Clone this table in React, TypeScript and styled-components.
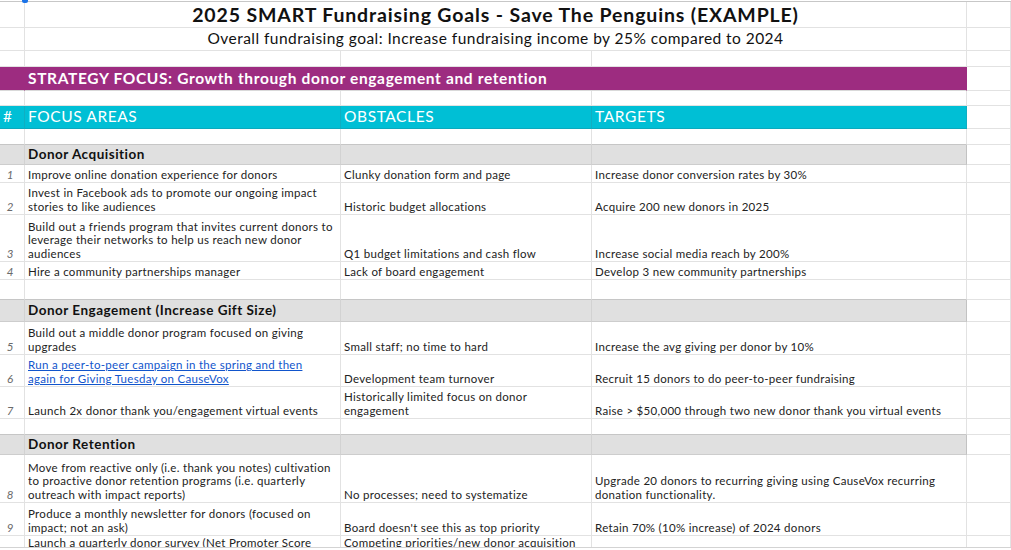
import React from "react";
import styled, { createGlobalStyle, css } from "styled-components";

const GlobalStyle = createGlobalStyle`
  html, body { margin: 0; padding: 0; background: #ffffff; }
  body { font-family: "Lato", "Open Sans", sans-serif; color: #222; }
`;

const COLS = "25px 316px 251px 375px 44px";
const GRID = "#e2e2e2";
const FONT = `"Lato", "Open Sans", sans-serif`;

const Sheet = styled.div`
  position: relative;
  height: 548px;
  overflow: hidden;
  padding-top: 1px;
  border-bottom: 1px solid #d3d3d3;
  box-sizing: border-box;
`;

const Grid = styled.div`
  border-top: 1px solid #c7c7c7;
`;

const Marker = styled.span`
  position: absolute;
  left: 22px;
  top: 0;
  width: 6px;
  height: 3px;
  background: #1a73e8;
  border-radius: 0 0 2px 2px;
`;

const Row = styled.div<{ $h: number }>`
  display: grid;
  grid-template-columns: ${COLS};
  height: ${(p) => p.$h}px;
`;

type Variant = "plain" | "purple" | "teal" | "gray";

const Cell = styled.div<{
  $span?: number;
  $variant?: Variant;
  $darkBottom?: boolean;
  $edge?: boolean;
}>`
  box-sizing: border-box;
  grid-column: span ${(p) => p.$span ?? 1};
  display: flex;
  flex-direction: column;
  justify-content: flex-end;
  padding: 0 3px 1px 3px;
  overflow: hidden;
  font-family: ${FONT};
  font-size: 11.5px;
  letter-spacing: 0.3px;
  line-height: 13.4px;
  color: #222;
  border-right: 1px solid ${GRID};
  border-bottom: 1px solid ${(p) => (p.$darkBottom ? "#c6c6c6" : GRID)};
  white-space: nowrap;
  ${(p) =>
    p.$variant === "purple" &&
    css`
      background: #9d2c80;
      color: #fff;
      border-right-color: #9d2c80;
      border-bottom-color: #d9d9d9;
      justify-content: center;
      font-weight: 700;
      font-size: 15.5px;
      letter-spacing: 0.65px;
      padding-bottom: 0;
    `}
  ${(p) =>
    p.$variant === "teal" &&
    css`
      background: #00bfd5;
      color: #fff;
      border-right-color: #10aec2;
      border-bottom-color: #0ba9bd;
      justify-content: center;
      font-size: 15.5px;
      letter-spacing: 0.6px;
      padding-bottom: 0;
    `}
  ${(p) =>
    p.$variant === "gray" &&
    css`
      background: #e0e0e0;
      color: #111;
      border-right-color: ${p.$edge ? "#c2c2c2" : "#d2d2d2"};
      border-bottom-color: #cdcdcd;
      justify-content: center;
      font-weight: 700;
      font-size: 13.5px;
      letter-spacing: 0.5px;
      padding-bottom: 0;
    `}
`;

const TitleCell = styled(Cell)<{ $size: number; $weight: number; $ls: number }>`
  align-items: center;
  justify-content: center;
  font-size: ${(p) => p.$size}px;
  font-weight: ${(p) => p.$weight};
  letter-spacing: ${(p) => p.$ls}px;
  color: #111;
  padding-bottom: 0;
`;

const NumCell = styled(Cell)`
  align-items: center;
  padding-right: 7px;
  font-style: italic;
  letter-spacing: 0;
  color: #6a6a6a;
`;

const Line = styled.span<{ $link?: boolean }>`
  display: block;
  ${(p) =>
    p.$link &&
    css`
      color: #1155cc;
      text-decoration: underline;
    `}
`;

type Item = {
  n: number;
  h: number;
  area: string[];
  obstacle: string[];
  target: string[];
  link?: boolean;
};

type Section = {
  title: string;
  h: number;
  spacerBefore: number;
  items: Item[];
};

const sections: Section[] = [
  {
    title: "Donor Acquisition",
    h: 20,
    spacerBefore: 16,
    items: [
      {
        n: 1,
        h: 18,
        area: ["Improve online donation experience for donors"],
        obstacle: ["Clunky donation form and page"],
        target: ["Increase donor conversion rates by 30%"],
      },
      {
        n: 2,
        h: 32,
        area: [
          "Invest in Facebook ads to promote our ongoing impact",
          "stories to like audiences",
        ],
        obstacle: ["Historic budget allocations"],
        target: ["Acquire 200 new donors in 2025"],
      },
      {
        n: 3,
        h: 47,
        area: [
          "Build out a friends program that invites current donors to",
          "leverage their networks to help us reach new donor",
          "audiences",
        ],
        obstacle: ["Q1 budget limitations and cash flow"],
        target: ["Increase social media reach by 200%"],
      },
      {
        n: 4,
        h: 18,
        area: ["Hire a community partnerships manager"],
        obstacle: ["Lack of board engagement"],
        target: ["Develop 3 new community partnerships"],
      },
    ],
  },
  {
    title: "Donor Engagement (Increase Gift Size)",
    h: 22,
    spacerBefore: 20,
    items: [
      {
        n: 5,
        h: 33,
        area: ["Build out a middle donor program focused on giving", "upgrades"],
        obstacle: ["Small staff; no time to hard"],
        target: ["Increase the avg giving per donor by 10%"],
      },
      {
        n: 6,
        h: 32,
        link: true,
        area: [
          "Run a peer-to-peer campaign in the spring and then",
          "again for Giving Tuesday on CauseVox",
        ],
        obstacle: ["Development team turnover"],
        target: ["Recruit 15 donors to do peer-to-peer fundraising"],
      },
      {
        n: 7,
        h: 32,
        area: ["Launch 2x donor thank you/engagement virtual events"],
        obstacle: ["Historically limited focus on donor", "engagement"],
        target: ["Raise > $50,000 through two new donor thank you virtual events"],
      },
    ],
  },
  {
    title: "Donor Retention",
    h: 20,
    spacerBefore: 16,
    items: [
      {
        n: 8,
        h: 48,
        area: [
          "Move from reactive only (i.e. thank you notes) cultivation",
          "to proactive donor retention programs (i.e. quarterly",
          "outreach with impact reports)",
        ],
        obstacle: ["No processes; need to systematize"],
        target: [
          "Upgrade 20 donors to recurring giving using CauseVox recurring",
          "donation functionality.",
        ],
      },
      {
        n: 9,
        h: 33,
        area: [
          "Produce a monthly newsletter for donors (focused on",
          "impact; not an ask)",
        ],
        obstacle: ["Board doesn't see this as top priority"],
        target: ["Retain 70% (10% increase) of 2024 donors"],
      },
      {
        n: 10,
        h: 42,
        area: [
          "Launch a quarterly donor survey (Net Promoter Score",
          "or NPS) to measure donor satisfaction and",
          "improve stewardship",
        ],
        obstacle: [
          "Competing priorities/new donor acquisition",
          "efforts take precedence over",
          "retention",
        ],
        target: [],
      },
    ],
  },
];

const Lines: React.FC<{ lines: string[]; link?: boolean }> = ({ lines, link }) => (
  <>
    {lines.map((l, i) => (
      <Line key={i} $link={link}>
        {l}
      </Line>
    ))}
  </>
);

const Spacer: React.FC<{ h: number; dark?: boolean }> = ({ h, dark }) => (
  <Row $h={h}>
    <Cell $darkBottom={dark} />
    <Cell $darkBottom={dark} />
    <Cell $darkBottom={dark} />
    <Cell $darkBottom={dark} />
    <Cell />
  </Row>
);

export default function App() {
  return (
    <>
      <GlobalStyle />
      <Sheet>
        <Marker />
        <Grid>
          <Row $h={26}>
            <Cell />
            <TitleCell $span={3} $size={19.5} $weight={700} $ls={0.85}>
              2025 SMART Fundraising Goals - Save The Penguins (EXAMPLE)
            </TitleCell>
            <Cell />
          </Row>
          <Row $h={23}>
            <Cell />
            <TitleCell $span={3} $size={15.5} $weight={400} $ls={0.45}>
              Overall fundraising goal: Increase fundraising income by 25% compared to 2024
            </TitleCell>
            <Cell />
          </Row>
          <Spacer h={16} />
          <Row $h={24}>
            <Cell $variant="purple" />
            <Cell $variant="purple" $span={3}>
              STRATEGY FOCUS: Growth through donor engagement and retention
            </Cell>
            <Cell />
          </Row>
          <Spacer h={15} />
          <Row $h={23}>
            <Cell $variant="teal">#</Cell>
            <Cell $variant="teal">FOCUS AREAS</Cell>
            <Cell $variant="teal">OBSTACLES</Cell>
            <Cell $variant="teal">TARGETS</Cell>
            <Cell />
          </Row>
          {sections.map((s) => (
            <React.Fragment key={s.title}>
              <Spacer h={s.spacerBefore} dark />
              <Row $h={s.h}>
                <Cell $variant="gray" />
                <Cell $variant="gray">{s.title}</Cell>
                <Cell $variant="gray" />
                <Cell $variant="gray" $edge />
                <Cell />
              </Row>
              {s.items.map((it) => (
                <Row $h={it.h} key={it.n}>
                  <NumCell>{it.n}</NumCell>
                  <Cell>
                    <Lines lines={it.area} link={it.link} />
                  </Cell>
                  <Cell>
                    <Lines lines={it.obstacle} />
                  </Cell>
                  <Cell>
                    <Lines lines={it.target} />
                  </Cell>
                  <Cell />
                </Row>
              ))}
            </React.Fragment>
          ))}
        </Grid>
      </Sheet>
    </>
  );
}
